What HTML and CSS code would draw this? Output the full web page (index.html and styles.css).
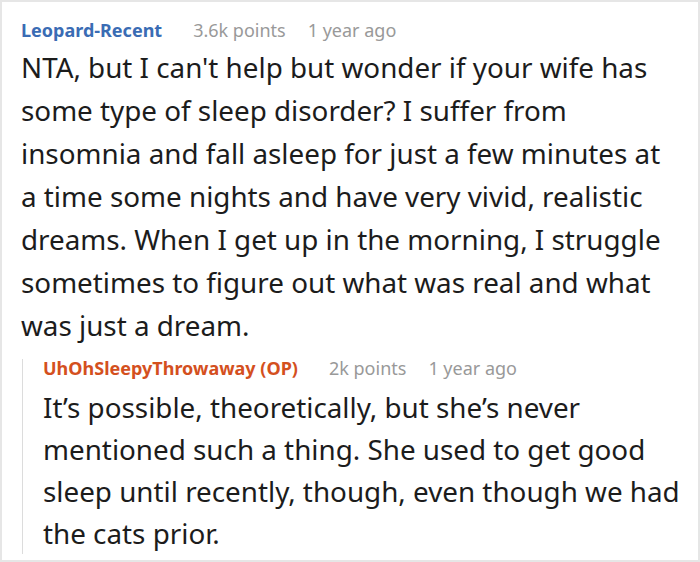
FILE: index.html
```html
<!DOCTYPE html>
<html>
<head>
<meta charset="utf-8">
<link rel="stylesheet" href="styles.css">
</head>
<body>
<div class="thread">
  <div class="comment">
    <div class="meta">
      <span class="author">Leopard-Recent</span>
      <span class="info">3.6k points</span>
      <span class="info">1 year ago</span>
    </div>
    <p class="body">NTA, but I can't help but wonder if your wife has some type of sleep disorder? I suffer from insomnia and fall asleep for just a few minutes at a time some nights and have very vivid, realistic dreams. When I get up in the morning, I struggle sometimes to figure out what was real and what was just a dream.</p>
    <div class="reply">
      <div class="meta">
        <span class="author op">UhOhSleepyThrowaway (OP)</span>
        <span class="info">2k points</span>
        <span class="info">1 year ago</span>
      </div>
      <p class="body">It’s possible, theoretically, but she’s never mentioned such a thing. She used to get good sleep until recently, though, even though we had the cats prior.</p>
    </div>
  </div>
</div>
</body>
</html>
```
FILE: styles.css
```css
html, body { margin: 0; padding: 0; background: #fff; }
.thread {
  width: 700px;
  height: 562px;
  box-sizing: border-box;
  border: 2px solid #e6e6e6;
  overflow: hidden;
  font-family: "Noto Sans", "Open Sans", sans-serif;
}
.comment { padding: 14px 20px 0 19px; }
.meta {
  display: flex;
  gap: 22px;
  font-size: 18px;
  line-height: 28px;
  margin-bottom: 2px;
}
.author { font-weight: bold; color: #3a6cb4; margin-right: 9px; }
.author.op { color: #d4501e; }
.info { color: #999; }
.body { margin: 0; font-size: 27.8px; line-height: 43px; color: #1c1c1c; }
.reply {
  margin: 20px -10px 0 1px;
  border-left: 1px solid #dcdcdc;
  padding-left: 20px;
}
.reply .meta { line-height: 18px; margin-top: -8px; margin-bottom: 9px; }
.reply .body { line-height: 42px; margin-bottom: -11px; }
```
